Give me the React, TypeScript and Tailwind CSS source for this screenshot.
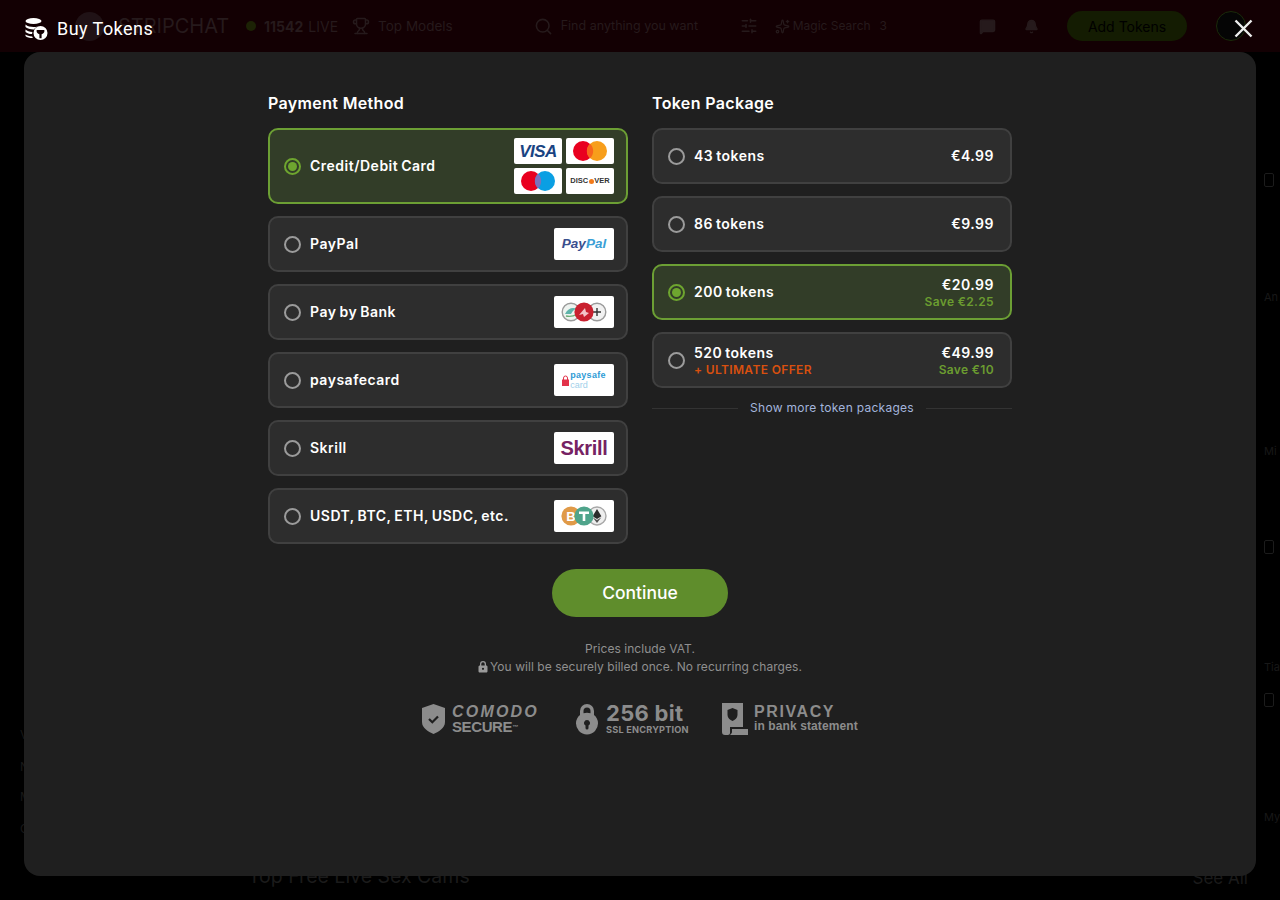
import { Bell, MessageSquare, Search, SlidersHorizontal, Sparkles, Trophy } from 'lucide-react';
import type { ReactNode } from 'react';

const Radio = ({ checked }: { checked?: boolean }) => (
	<span
		className={`flex h-[17px] w-[17px] shrink-0 items-center justify-center rounded-full border-2 ${checked ? 'border-[#6ea52f]' : 'border-[#9b9b9b]'}`}
	>
		{checked && <span className="h-[9px] w-[9px] rounded-full bg-[#6ea52f]" />}
	</span>
);

const LogoBox = ({ children }: { children: ReactNode }) => (
	<div className="flex h-8 w-[60px] items-center justify-center rounded-[2px] bg-white">{children}</div>
);

const SmallCard = ({ children }: { children: ReactNode }) => (
	<div className="flex h-[26px] w-12 items-center justify-center rounded-[2px] bg-white">{children}</div>
);

const CardLogos = () => (
	<div className="grid grid-cols-2 gap-x-1 gap-y-1">
		<SmallCard>
			<span className="font-['Liberation_Sans',sans-serif] text-[17px] font-bold italic leading-none tracking-[-0.5px] text-[#1a4482]">VISA</span>
		</SmallCard>
		<SmallCard>
			<svg width="34" height="20" viewBox="0 0 34 20">
				<circle cx="10" cy="10" r="10" fill="#e9001f" />
				<circle cx="24" cy="10" r="10" fill="#f79e1b" />
				<path d="M17 2.700a10 10 0 0 1 0 14.600a10 10 0 0 1 0-14.600z" fill="#f7651c" />
			</svg>
		</SmallCard>
		<SmallCard>
			<svg width="34" height="20" viewBox="0 0 34 20">
				<circle cx="10" cy="10" r="10" fill="#e9001f" />
				<circle cx="24" cy="10" r="10" fill="#0a9fe3" />
				<path d="M17 2.700a10 10 0 0 1 0 14.600a10 10 0 0 1 0-14.600z" fill="#7c72bd" />
			</svg>
		</SmallCard>
		<SmallCard>
			<span className="flex items-center font-['Liberation_Sans',sans-serif] text-[7.5px] font-bold leading-none text-[#333]">
				DISC<span className="mx-[0.5px] h-[5px] w-[5px] rounded-full bg-[#f27a1a]" />VER
			</span>
		</SmallCard>
	</div>
);

const BankLogo = () => (
	<svg width="46" height="20" viewBox="0 0 46 20">
		<circle cx="10" cy="10" r="8.800" fill="#eef3f0" stroke="#9a9a9a" strokeWidth="1.400" />
		<path d="M4 12c3-6 8-7 12-5-3 0-5 3-6 5z" fill="#5fb3aa" />
		<path d="M5 14c4 1 8 0 11-2" stroke="#6aae74" strokeWidth="1.300" fill="none" />
		<circle cx="36" cy="10" r="8.800" fill="#f1f1f1" stroke="#9a9a9a" strokeWidth="1.400" />
		<path d="M32 10h8M36 6v8" stroke="#333" strokeWidth="1.400" />
		<circle cx="23" cy="10" r="9.600" fill="#c9202f" />
		<path d="M18 13l6-7 1 4 3 1-5 4-1-3z" fill="#f3c4c8" />
	</svg>
);

const CryptoLogo = () => (
	<svg width="46" height="20" viewBox="0 0 46 20">
		<circle cx="36" cy="10" r="9" fill="#eeeeee" stroke="#a8a8a8" strokeWidth="1.400" />
		<path d="M36 3l-4.400 7.200L36 13l4.400-2.800z" fill="#2b2b2b" />
		<path d="M36 14l-4.400-2.800L36 17l4.400-5.800z" fill="#555" />
		<circle cx="10" cy="10" r="9.600" fill="#e09a48" />
		<text x="10" y="14.500" textAnchor="middle" fontSize="13" fontWeight="700" fill="#fff" fontFamily="Liberation Sans">
			B
		</text>
		<circle cx="23" cy="10" r="9.600" fill="#4fa48b" />
		<path d="M18 5.500h10v2.400h-3.700V15h-2.600V7.900H18z" fill="#fff" />
	</svg>
);

const payments: { label: string; logo: ReactNode }[] = [
	{
		label: 'PayPal',
		logo: (
			<span className="font-['Liberation_Sans',sans-serif] text-[13.5px] font-bold italic leading-none text-[#3a4f8e]">
				Pay<span className="text-[#3a9fd6]">Pal</span>
			</span>
		)
	},
	{ label: 'Pay by Bank', logo: <BankLogo /> },
	{
		label: 'paysafecard',
		logo: (
			<span className="flex items-center gap-[1px]">
				<svg width="7" height="11" viewBox="0 0 7 11">
					<path d="M1.500 5V3a2 2 0 0 1 4 0v2" fill="none" stroke="#e2334a" strokeWidth="1" />
					<path d="M0 4.500h7V11H0z" fill="#e2334a" />
				</svg>
				<span className="flex flex-col font-['Liberation_Sans',sans-serif] text-[9px] leading-[10px]">
					<span className="font-bold tracking-[0.3px] text-[#2f9bd6]">paysafe</span>
					<span className="text-[#9fd0ea]">card</span>
				</span>
			</span>
		)
	},
	{
		label: 'Skrill',
		logo: <span className="font-['Liberation_Sans',sans-serif] text-[20px] font-bold leading-none tracking-[-0.3px] text-[#762263]">Skrill</span>
	},
	{ label: 'USDT, BTC, ETH, USDC, etc.', logo: <CryptoLogo /> }
];

const packages = [
	{ tokens: '43 tokens', price: '€4.99' },
	{ tokens: '86 tokens', price: '€9.99' },
	{ tokens: '200 tokens', price: '€20.99', save: 'Save €2.25', checked: true },
	{ tokens: '520 tokens', price: '€49.99', save: 'Save €10', offer: '+ ULTIMATE OFFER' }
];

const rowBase = 'flex items-center rounded-[10px] border-2 pl-[14px]';
const rowOff = 'border-[#404040] bg-[#2d2d2d]';
const rowOn = 'border-[#6c9f34] bg-[#323d28]';
const rowLabel = 'text-[14px] font-semibold leading-[17px] tracking-[0.5px] [word-spacing:-1px]';

const CoinsIcon = () => (
	<svg width="24" height="22" viewBox="0 0 24 22" fill="#fff">
		<ellipse cx="9.500" cy="3" rx="8" ry="3" />
		<path d="M1.500 6.500c2 1.800 5 2.500 8 2.500 1.600 0 3-.2 4.200-.6-1.500.7-2.800 1.700-3.700 3.100-3.400.1-6.800-.7-8.500-2.400z" />
		<path d="M1.500 11.500c1.700 1.500 4 2.200 7 2.400-.3.700-.4 1.400-.4 2.100-2.900-.1-5.200-.9-6.600-2.100z" />
		<path d="M1.500 16.500c1.400 1.100 3.500 1.800 6.700 2 .2.600.4 1.100.7 1.600-3.600-.1-6-.9-7.400-2.200z" />
		<path
			fillRule="evenodd"
			d="M16.500 8a7 7 0 1 1 0 14 7 7 0 0 1 0-14zm-4 4.500c0 2 1.400 3.400 2.900 3.800v4h2.200v-4c1.500-.4 2.900-1.800 2.900-3.800 0-.3-.3-.5-.6-.5h-6.800c-.3 0-.6.2-.6.500z"
		/>
	</svg>
);

const Backdrop = () => (
	<div className="flex h-full flex-col">
		<div className="flex h-[52px] shrink-0 items-center bg-[#130003] text-[15px] text-[#261a1c]">
			<span className="ml-[75px] h-[29px] w-[29px] rounded-full bg-[#201216]" />
			<span className="ml-[14px] w-[110px] whitespace-nowrap text-[20px] leading-none">STRIPCHAT</span>
			<span className="ml-[18px] h-[10px] w-[10px] rounded-full bg-[#1c2205]" />
			<span className="ml-[8px] text-[14px] font-bold">11542</span>
			<span className="ml-[5px] text-[14px]">LIVE</span>
			<Trophy className="ml-[14px]" size={18} />
			<span className="ml-[8px] text-[13.5px]">Top Models</span>
			<Search className="ml-[81px]" size={19} />
			<span className="ml-[8px] w-[160px] whitespace-nowrap text-[12.5px]">Find anything you want</span>
			<SlidersHorizontal className="ml-[19px]" size={18} />
			<Sparkles className="ml-[17px]" size={15} />
			<span className="ml-[3px] text-[12px]">Magic Search</span>
			<span className="ml-[9px] text-[12px]">3</span>
			<MessageSquare className="ml-[92px]" size={17} fill="currentColor" />
			<Bell className="ml-[28px]" size={15} fill="currentColor" />
			<span className="ml-[28px] flex h-[30px] w-[120px] items-center justify-center rounded-full bg-[#141c02] text-[14px] text-[#000]">Add Tokens</span>
			<span className="ml-[29px] h-[30px] w-[30px] rounded-full border border-[#1b2a0a] bg-[#050505]" />
		</div>
		<div className="flex min-h-0 flex-1 bg-black text-[#181818]">
			<div className="flex w-[248px] shrink-0 flex-col pl-[20px] pt-[676px] text-[12px] leading-[14px]">
				<span>V</span>
				<span className="mt-[18px]">N</span>
				<span className="mt-[16px]">M</span>
				<span className="mt-[18px]">O</span>
			</div>
			<div className="flex flex-1 items-end justify-between pb-[9px] text-[19.5px] text-[#1b1b1b]">
				<span>Top Free Live Sex Cams</span>
				<span className="text-[17px]">See All</span>
			</div>
			<div className="flex w-[32px] shrink-0 flex-col pl-[16px] text-[11px] leading-[14px]">
				<span className="mt-[121px] h-[14px] w-[10px] rounded-[2px] border border-[#1c1c1c]" />
				<span className="mt-[103px]">An</span>
				<span className="mt-[140px]">Mi</span>
				<span className="mt-[82px] h-[14px] w-[10px] rounded-[2px] border border-[#1c1c1c]" />
				<span className="mt-[106px]">Tia</span>
				<span className="mt-[19px] h-[14px] w-[10px] rounded-[2px] border border-[#1c1c1c]" />
				<span className="mt-[103px]">My</span>
			</div>
		</div>
	</div>
);

const App = () => {
	return (
		<div className="relative h-[900px] w-full overflow-hidden bg-black font-['Inter',sans-serif] text-white">
			<Backdrop />

			<div className="absolute inset-0 flex flex-col">
				<div className="flex h-[52px] shrink-0 items-center justify-between pl-6 pr-[27px] pt-[5px]">
					<div className="flex items-center gap-[9px]">
						<CoinsIcon />
						<span className="font-['Roboto',sans-serif] text-[18px] leading-none tracking-[0.45px]">Buy Tokens</span>
					</div>
					<svg width="19" height="19" viewBox="0 0 19 19" stroke="#eeeeee" strokeWidth="2.400" fill="none">
						<path d="M1.500 1.500l16 16M17.500 1.500l-16 16" />
					</svg>
				</div>

				<div className="mx-6 flex h-[824px] flex-col items-center rounded-2xl bg-[#1f1f1f] pt-[41px]">
					<div className="flex items-start gap-6">
						<div className="flex w-[360px] flex-col">
							<h2 className="mb-[15px] text-[16px] font-semibold leading-[20px] tracking-[0.35px]">Payment Method</h2>
							<div className="flex flex-col gap-3">
								<div className={`${rowBase} ${rowOn} h-[76px] justify-between pr-3`}>
									<div className="flex items-center gap-[9px]">
										<Radio checked />
										<span className={`${rowLabel} -mt-px`}>Credit/Debit Card</span>
									</div>
									<CardLogos />
								</div>
								{payments.map((p) => (
									<div key={p.label} className={`${rowBase} ${rowOff} h-14 justify-between pr-3`}>
										<div className="flex items-center gap-[9px]">
											<Radio />
											<span className={`${rowLabel} -mt-px`}>{p.label}</span>
										</div>
										<LogoBox>{p.logo}</LogoBox>
									</div>
								))}
							</div>
						</div>

						<div className="flex w-[360px] flex-col">
							<h2 className="mb-[15px] text-[16px] font-semibold leading-[20px] tracking-[0.35px]">Token Package</h2>
							<div className="flex flex-col gap-3">
								{packages.map((p) => (
									<div key={p.tokens} className={`${rowBase} ${p.checked ? rowOn : rowOff} h-14 justify-between pr-4`}>
										<div className="flex items-center gap-[9px]">
											<Radio checked={p.checked} />
											<div className={`flex flex-col ${p.offer ? 'mt-px' : '-mt-px'}`}>
												<span className={rowLabel}>{p.tokens}</span>
												{p.offer && <span className="text-[12px] font-semibold leading-[17px] tracking-[0.35px] text-[#d9500f]">{p.offer}</span>}
											</div>
										</div>
										<div className={`flex flex-col items-end ${p.save ? 'mt-px' : '-mt-px'}`}>
											<span className={rowLabel}>{p.price}</span>
											{p.save && <span className="text-[12px] font-semibold leading-[17px] tracking-[0.35px] text-[#6b9c30]">{p.save}</span>}
										</div>
									</div>
								))}
							</div>
							<div className="mt-3 flex h-[16px] items-center gap-3">
								<span className="h-px flex-1 bg-[#333333]" />
								<span className="text-[12px] leading-4 tracking-[0.28px] text-[#a3b5dd]">Show more token packages</span>
								<span className="h-px flex-1 bg-[#333333]" />
							</div>
						</div>
					</div>

					<button className="mt-[25px] h-12 w-44 rounded-full bg-[#5f8d2c] text-[17.5px] font-medium leading-none text-white">Continue</button>

					<div className="mt-[23px] flex flex-col items-center text-[12px] leading-[18px] tracking-[0.05px] text-[#8f8f8f]">
						<span>Prices include VAT.</span>
						<span className="flex items-center gap-[2px]">
							<svg width="10" height="12" viewBox="0 0 10 12" fill="#9a9a9a">
								<path
									fillRule="evenodd"
									d="M2 4.500V3a3 3 0 0 1 6 0v1.500h.2c.7 0 1.300.6 1.300 1.300v4.400c0 .7-.6 1.300-1.300 1.300H1.800C1.100 11.500.5 10.900.5 10.200V5.800c0-.7.6-1.300 1.300-1.300zM3.300 4.500h3.400V3a1.700 1.700 0 0 0-3.400 0zM5 6.700a1.100 1.100 0 1 0 0 2.200 1.100 1.100 0 0 0 0-2.200z"
								/>
							</svg>
							You will be securely billed once. No recurring charges.
						</span>
					</div>

					<div className="mt-[26px] flex items-center text-[#8c8c8c]">
						<div className="flex items-center gap-[7px]">
							<svg width="23" height="30" viewBox="0 0 23 30">
								<path d="M11.500 0L23 4v14c0 6-6 9.500-11.500 12C6 27.500 0 24 0 18V4z" fill="#8c8c8c" />
								<path d="M7 15l3.300 3.300L16 12.500" stroke="#1f1f1f" strokeWidth="2.200" fill="none" />
							</svg>
							<div className="flex w-[91px] flex-col font-['Liberation_Sans',sans-serif] font-bold">
								<span className="text-[16px] italic leading-[15px] tracking-[2.2px]">COMODO</span>
								<span className="text-[15px] leading-[15px] tracking-[-0.4px]">
									SECURE<sup className="text-[6px] leading-none">™</sup>
								</span>
							</div>
						</div>
						<div className="ml-[32px] flex items-center gap-[7px]">
							<svg width="24" height="32" viewBox="0 0 24 32" fill="#8c8c8c">
								<path
									fillRule="evenodd"
									d="M5 12V8a7 7 0 0 1 14 0v4a11 11 0 1 1-14 0zM8.500 10.300a11 11 0 0 1 7 0V8a3.500 3.500 0 0 0-7 0zM12 17a3 3 0 0 0-1.500 5.600V25a1.500 1.500 0 0 0 3 0v-2.400A3 3 0 0 0 12 17z"
								/>
							</svg>
							<div className="flex w-[83px] flex-col font-bold">
								<span className="text-[22px] leading-[23px] tracking-[0.3px]">256 bit</span>
								<span className="whitespace-nowrap text-[9.2px] leading-[10px] tracking-[0.2px]">SSL ENCRYPTION</span>
							</div>
						</div>
						<div className="ml-[33px] flex items-center gap-[6px]">
							<svg width="26" height="32" viewBox="0 0 26 32" fill="#8c8c8c">
								<path fillRule="evenodd" d="M0 0h21v24H8v6c0 1-1 2-2 2H3c-2 0-3-1-3-3zM10.500 5l-5 2v5c0 3 2.500 5 5 6 2.500-1 5-3 5-6V7z" />
								<path d="M10 26h16v6H8c1-1 2-2 2-3z" />
							</svg>
							<div className="flex w-[104px] flex-col font-['Liberation_Sans',sans-serif] font-bold">
								<span className="text-[16px] leading-[16px] tracking-[1.6px]">PRIVACY</span>
								<span className="whitespace-nowrap text-[12px] leading-[13px] tracking-[0.1px]">in bank statement</span>
							</div>
						</div>
					</div>
				</div>
			</div>
		</div>
	);
};

export default App;
